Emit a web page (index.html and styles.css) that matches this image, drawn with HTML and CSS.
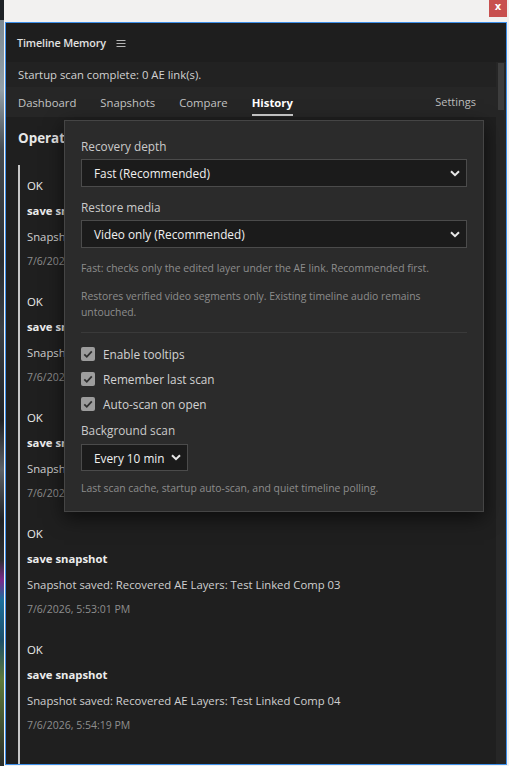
FILE: index.html
```html
<!DOCTYPE html>
<html>
<head>
<meta charset="utf-8">
<title>Timeline Memory</title>
<link rel="stylesheet" href="styles.css">
</head>
<body>
<div class="desktop"></div>
<div class="window">
  <div class="titlebar"><div class="close">x</div></div>
  <div class="frame">
    <div class="panel-header">
      <span class="title">Timeline Memory</span>
      <svg class="menu-icon" width="10" height="8" viewBox="0 0 10 8"><path d="M0.5 1.5H9.5M0.5 4.5H9.5M0.5 7.5H9.5" stroke="#b5b5b5" stroke-width="1" fill="none"/></svg>
    </div>
    <div class="main">
      <div class="content">
        <div class="status">Startup scan complete: 0 AE link(s).</div>
        <div class="tabs">
          <span class="tab">Dashboard</span>
          <span class="tab">Snapshots</span>
          <span class="tab">Compare</span>
          <span class="tab active">History</span>
          <span class="tab settings">Settings</span>
        </div>
        <div class="page">
          <h2 class="page-title">Operation History</h2>
          <div class="history">
            <div class="item">
              <div class="st">OK</div>
              <div class="op">save snapshot</div>
              <div class="msg">Snapshot saved: Recovered AE Layers: Test Linked Comp 00</div>
              <div class="date">7/6/2026, 5:48:12 PM</div>
            </div>
            <div class="item">
              <div class="st">OK</div>
              <div class="op">save snapshot</div>
              <div class="msg">Snapshot saved: Recovered AE Layers: Test Linked Comp 01</div>
              <div class="date">7/6/2026, 5:50:27 PM</div>
            </div>
            <div class="item">
              <div class="st">OK</div>
              <div class="op">save snapshot</div>
              <div class="msg">Snapshot saved: Recovered AE Layers: Test Linked Comp 02</div>
              <div class="date">7/6/2026, 5:51:44 PM</div>
            </div>
            <div class="item">
              <div class="st">OK</div>
              <div class="op">save snapshot</div>
              <div class="msg">Snapshot saved: Recovered AE Layers: Test Linked Comp 03</div>
              <div class="date">7/6/2026, 5:53:01 PM</div>
            </div>
            <div class="item">
              <div class="st">OK</div>
              <div class="op">save snapshot</div>
              <div class="msg">Snapshot saved: Recovered AE Layers: Test Linked Comp 04</div>
              <div class="date">7/6/2026, 5:54:19 PM</div>
            </div>
          </div>
        </div>
      </div>
      <div class="scrollbar"><div class="thumb"></div></div>
    </div>

    <div class="popover">
      <div class="field">
        <div class="label">Recovery depth</div>
        <div class="select wide">
          <span>Fast (Recommended)</span>
          <svg width="10" height="7" viewBox="0 0 10 7"><path d="M1 1.2L5 5.2L9 1.2" stroke="#e8e8e8" stroke-width="2" fill="none"/></svg>
        </div>
      </div>
      <div class="field second">
        <div class="label">Restore media</div>
        <div class="select wide">
          <span>Video only (Recommended)</span>
          <svg width="10" height="7" viewBox="0 0 10 7"><path d="M1 1.2L5 5.2L9 1.2" stroke="#e8e8e8" stroke-width="2" fill="none"/></svg>
        </div>
      </div>
      <p class="hint first">Fast: checks only the edited layer under the AE link. Recommended first.</p>
      <p class="hint">Restores verified video segments only. Existing timeline audio remains untouched.</p>
      <div class="separator"></div>
      <div class="checks">
        <label class="check">
          <svg width="14" height="14" viewBox="0 0 14 14"><rect width="14" height="14" rx="2" fill="#9d9d9d"/><path d="M3.3 7.3L5.8 9.8L10.8 4.4" stroke="#2f2f2f" stroke-width="1.8" fill="none"/></svg>
          <span>Enable tooltips</span>
        </label>
        <label class="check">
          <svg width="14" height="14" viewBox="0 0 14 14"><rect width="14" height="14" rx="2" fill="#9d9d9d"/><path d="M3.3 7.3L5.8 9.8L10.8 4.4" stroke="#2f2f2f" stroke-width="1.8" fill="none"/></svg>
          <span>Remember last scan</span>
        </label>
        <label class="check">
          <svg width="14" height="14" viewBox="0 0 14 14"><rect width="14" height="14" rx="2" fill="#9d9d9d"/><path d="M3.3 7.3L5.8 9.8L10.8 4.4" stroke="#2f2f2f" stroke-width="1.8" fill="none"/></svg>
          <span>Auto-scan on open</span>
        </label>
      </div>
      <div class="field bg">
        <div class="label">Background scan</div>
        <div class="select small">
          <span>Every 10 min</span>
          <svg width="10" height="7" viewBox="0 0 10 7"><path d="M1 1.2L5 5.2L9 1.2" stroke="#e8e8e8" stroke-width="2" fill="none"/></svg>
        </div>
      </div>
      <p class="hint last">Last scan cache, startup auto-scan, and quiet timeline polling.</p>
    </div>
  </div>
</div>
</body>
</html>
```

FILE: styles.css
```css
* { box-sizing: border-box; }

html, body {
  margin: 0;
  padding: 0;
}

body {
  width: 509px;
  height: 766px;
  overflow: hidden;
  display: flex;
  font-family: "Open Sans", "Noto Sans", sans-serif;
  background: #1a1c1e;
}

.desktop {
  width: 4px;
  height: 766px;
  flex: none;
  background: linear-gradient(to bottom,
    #1e2226 0px, #1e2226 20px,
    #7d8a93 20px, #93a0a8 90px,
    #454b50 150px, #2a2d30 260px,
    #3a3f44 330px, #202225 420px,
    #5c6166 470px, #202225 520px,
    #2d2f30 560px, #7a2a8a 580px, #1b6f9c 600px,
    #1d4f6a 640px, #5e7a3a 680px, #2a2d2a 766px);
}

.window {
  width: 505px;
  height: 766px;
  flex: none;
  background: #f2f1f0;
}

.titlebar {
  height: 22px;
  display: flex;
  justify-content: flex-end;
  padding-right: 2px;
}

.close {
  width: 18px;
  height: 17px;
  background: #c8504f;
  color: #ffffff;
  font-family: "DejaVu Sans", sans-serif;
  font-weight: bold;
  font-size: 10px;
  line-height: 14px;
  text-align: center;
}

.frame {
  position: relative;
  margin-left: 1px;
  width: 502px;
  height: 743px;
  border: 1px solid #3c8ee8;
  background: #1f1f1f;
  display: flex;
  flex-direction: column;
  overflow: hidden;
}

.panel-header {
  height: 39px;
  flex: none;
  display: flex;
  align-items: center;
  padding-left: 11px;
  background: #1e1e1e;
}

.title {
  font-size: 10.8px;
  font-weight: 600;
  letter-spacing: -0.15px;
  color: #e2e2e2;
}

.menu-icon {
  margin-left: 10px;
  margin-top: 1px;
}

.main {
  flex: 1;
  display: flex;
  min-height: 0;
}

.content {
  flex: 1;
  min-width: 0;
  display: flex;
  flex-direction: column;
}

.scrollbar {
  width: 10px;
  flex: none;
  background: #262626;
  padding: 1px 2px 0 2px;
}

.thumb {
  height: 47px;
  background: #3d3d3d;
}

.status {
  height: 25px;
  line-height: 25px;
  padding-left: 12px;
  background: #222222;
  color: #d2d2d2;
  font-size: 11.3px;
}

.tabs {
  height: 30px;
  flex: none;
  display: flex;
  align-items: flex-start;
  gap: 24px;
  padding: 0 20px 0 12px;
  background: #262626;
}

.tab {
  padding-top: 7px;
  line-height: 18px;
  padding-bottom: 2px;
  border-bottom: 2px solid transparent;
  font-size: 11.3px;
  color: #c4c4c4;
}

.tab.active {
  color: #ffffff;
  font-weight: 700;
  border-bottom-color: #cfcfcf;
}

.tab.settings {
  margin-left: auto;
  color: #bdbdbd;
  font-size: 11px;
  padding-top: 6px;
}

.page {
  flex: 1;
  padding: 11px 0 0 12px;
  background: #1f1f1f;
}

.page-title {
  margin: 0 0 17px 0;
  line-height: 20px;
  font-size: 13.4px;
  font-weight: 700;
  color: #e8e8e8;
}

.history {
  border-left: 2px solid #c6c6c6;
  padding-left: 7px;
  padding-bottom: 20px;
}

.item {
  padding: 9px 0 9px 0;
}

.st {
  line-height: 24px;
  font-size: 11.4px;
  color: #ececec;
}

.op {
  line-height: 26px;
  font-size: 11.3px;
  font-weight: 700;
  color: #ececec;
}

.msg {
  line-height: 26px;
  font-size: 11.3px;
  color: #d0d0d0;
  white-space: nowrap;
}

.date {
  line-height: 22px;
  font-size: 10.5px;
  color: #8e8e8e;
}

/* popover */
.popover {
  position: absolute;
  left: 58px;
  top: 97px;
  width: 420px;
  padding: 17px 16px 15px 16px;
  background: #2b2b2b;
  border: 1px solid #454545;
  box-shadow: 0 6px 18px rgba(0, 0, 0, 0.6);
}

.label {
  line-height: 17px;
  margin-bottom: 4px;
  font-size: 11.8px;
  color: #cacaca;
}

.field.second {
  margin-top: 12px;
}

.select {
  display: flex;
  align-items: center;
  justify-content: space-between;
  height: 28px;
  padding: 0 6px 0 12px;
  background: #1b1b1b;
  border: 1px solid #4b4b4b;
  font-size: 11.8px;
  color: #f0f0f0;
}

.select.wide {
  width: 386px;
}

.select.small {
  width: 107px;
  height: 27px;
  padding-right: 6px;
}

.hint {
  margin: 12px 0 0 0;
  line-height: 16px;
  font-size: 10.4px;
  color: #8d8d8d;
}

.separator {
  margin-top: 12px;
  height: 1px;
  background: #3a3a3a;
}

.checks {
  margin-top: 8px;
}

.check {
  display: flex;
  align-items: center;
  gap: 8px;
  height: 25px;
  font-size: 11.8px;
  color: #d2d2d2;
}

.field.bg {
  margin-top: 6px;
}

.field.bg .label {
  margin-bottom: 5px;
}

.hint.last {
  margin-top: 9px;
}
```
